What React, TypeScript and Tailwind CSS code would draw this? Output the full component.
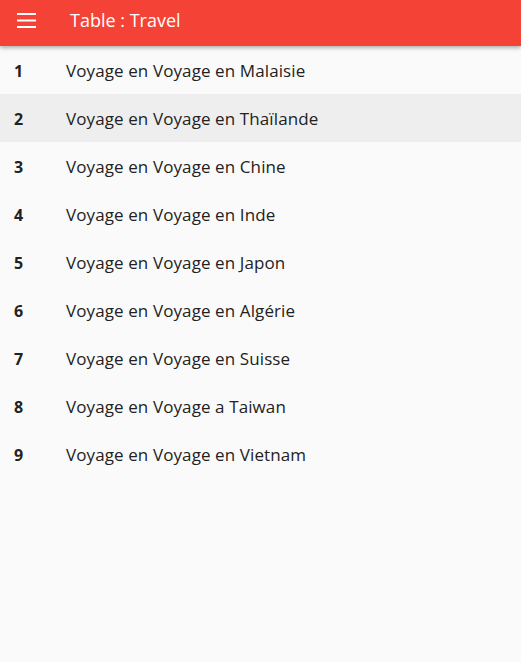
const rows = [
  "Voyage en Voyage en Malaisie",
  "Voyage en Voyage en Thaïlande",
  "Voyage en Voyage en Chine",
  "Voyage en Voyage en Inde",
  "Voyage en Voyage en Japon",
  "Voyage en Voyage en Algérie",
  "Voyage en Voyage en Suisse",
  "Voyage en Voyage a Taiwan",
  "Voyage en Voyage en Vietnam",
];

export default function App() {
  return (
    <div
      className="w-[521px] h-[662px] bg-[#fafafa] overflow-hidden"
      style={{ fontFamily: '"Open Sans", "Noto Sans", sans-serif' }}
    >
      <header className="relative z-10 flex items-center h-[46px] bg-[#f44336] text-white shadow-[0_2px_4px_rgba(0,0,0,0.3)]">
        <div className="w-[70px] pl-[17px] -mt-[6px]">
          <svg width="19" height="15" viewBox="0 0 19 15" fill="white">
            <rect x="0" y="0" width="19" height="2" />
            <rect x="0" y="6.5" width="19" height="2" />
            <rect x="0" y="13" width="19" height="2" />
          </svg>
        </div>
        <h1 className="text-[18px] -mt-[6px]">Table : Travel</h1>
      </header>
      <ul>
        {rows.map((r, i) => (
          <li
            key={i}
            className={`flex items-center h-12 pt-[2px] text-[#222222] ${
              i === 1 ? "bg-[#eeeeee]" : ""
            }`}
          >
            <span className="w-[66px] pl-[14px] font-bold text-[16px]">{i + 1}</span>
            <span className="text-[17px] tracking-[0.1px]">{r}</span>
          </li>
        ))}
      </ul>
    </div>
  );
}
